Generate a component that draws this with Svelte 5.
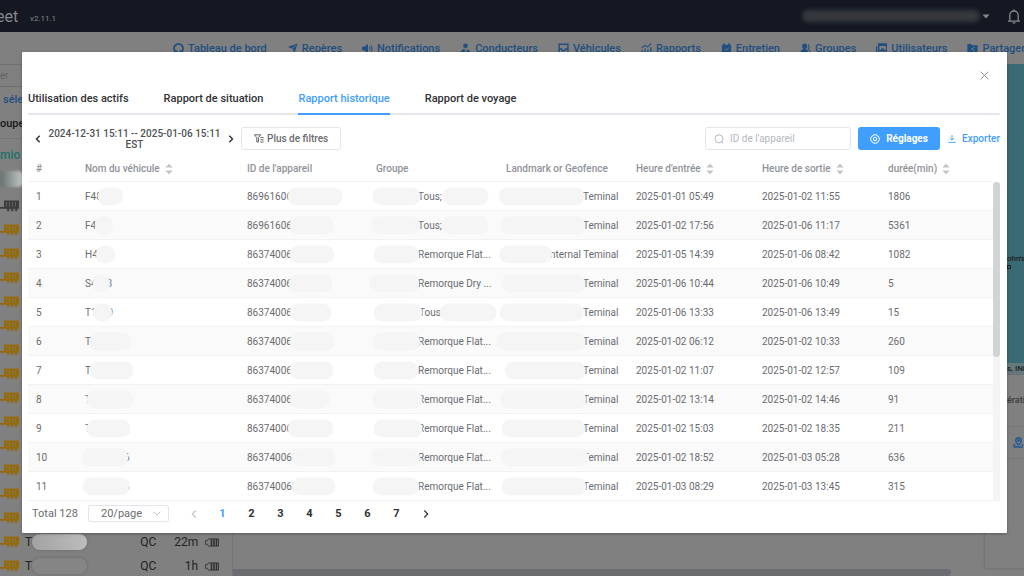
<script>
  const nav = [
    { label: "Tableau de bord", icon: "dash" },
    { label: "Repères", icon: "send" },
    { label: "Notifications", icon: "sound" },
    { label: "Conducteurs", icon: "driver" },
    { label: "Véhicules", icon: "inbox" },
    { label: "Rapports", icon: "chart" },
    { label: "Entretien", icon: "calendar" },
    { label: "Groupes", icon: "group" },
    { label: "Utilisateurs", icon: "users" },
    { label: "Partager", icon: "share" },
  ];

  const tabs = ["Utilisation des actifs", "Rapport de situation", "Rapport historique", "Rapport de voyage"];
  let activeTab = "Rapport historique";

  const columns = [
    { label: "#", width: 47 },
    { label: "Nom du véhicule", width: 162, sort: true },
    { label: "ID de l'appareil", width: 129 },
    { label: "Groupe", width: 130 },
    { label: "Landmark or Geofence", width: 130 },
    { label: "Heure d'entrée", width: 126, sort: true },
    { label: "Heure de sortie", width: 126, sort: true },
    { label: "durée(min)", width: 115, sort: true },
  ];

  // a cell is a list of parts: plain text, or a mask as [margin left, width, margin right]
  const rows = [
    [["F48", [-4, 25, 0]], ["86961606", [-4, 54, 0]], [[-3, 47, -2], "Tous;", [1, 45, 0]], [[-7, 85, -1], "Teminal"], "2025-01-01 05:49", "2025-01-02 11:55", "1806"],
    [["F4", [-1, 18, 0]], ["86961606", [-2, 43, 0]], [[-4, 48, -2], "Tous;", [1, 45, 0]], [[-5, 84, -2], "Teminal"], "2025-01-02 17:56", "2025-01-06 11:17", "5361"],
    [["H4", [-2, 19, 0]], ["86374006", [-2, 44, 0]], [[-2, 45, -1], "Remorque Flat..."], [[-6, 52, -2], "nternal Teminal"], "2025-01-05 14:39", "2025-01-06 08:42", "1082"],
    [["S4", [-4, 17, -3], "8"], ["86374006", [-3, 43, 0]], [[-6, 49, -1], "Remorque Dry ..."], [[-4, 83, -2], "Teminal"], "2025-01-06 10:44", "2025-01-06 10:49", "5"],
    [["T1", [-4, 19, -4], "9"], ["86374006", [-2, 41, 0]], [[-2, 48, -3], "Tous", [-1, 56, 0]], [[-6, 83, 0], "Teminal"], "2025-01-06 13:33", "2025-01-06 13:49", "15"],
    [["T", [-1, 41, 0]], ["86374006", [-2, 44, 0]], [[-3, 47, -2], "Remorque Flat..."], [[-9, 88, -2], "Teminal"], "2025-01-02 06:12", "2025-01-02 10:33", "260"],
    [["T", [-1, 43, 0]], ["86374006", [-2, 43, 0]], [[-2, 44, 0], "Remorque Flat..."], [[-1, 80, -2], "Teminal"], "2025-01-02 11:07", "2025-01-02 12:57", "109"],
    [["T", [-4, 46, 0]], ["86374006", [-2, 39, 0]], [[-3, 49, -4], "Remorque Flat..."], [[-5, 85, -3], "Teminal"], "2025-01-02 13:14", "2025-01-02 14:46", "91"],
    [["T", [-4, 43, 0]], ["86374006", [-4, 45, 0]], [[-2, 48, -4], "Remorque Flat..."], [[-4, 83, -2], "Teminal"], "2025-01-02 15:03", "2025-01-02 18:35", "211"],
    [[[-3, 46, -4], "6"], ["863740063", [-6, 43, 0]], [[-4, 48, -2], "Remorque Flat..."], [[-4, 86, -5], "Teminal"], "2025-01-02 18:52", "2025-01-03 05:28", "636"],
    [[[-2, 46, -5], "6"], ["863740063", [-6, 43, 0]], [[-3, 46, -1], "Remorque Flat..."], [[-4, 84, -3], "Teminal"], "2025-01-03 08:29", "2025-01-03 13:45", "315"],
  ];

  const pages = [1, 2, 3, 4, 5, 6, 7];
  let currentPage = 1;

  const assets = Array.from({ length: 16 }, (_, i) => ({
    online: i > 0,
    since: i === 14 ? "22m" : i === 15 ? "1h" : "",
  }));
</script>

<div class="page">
  <header class="topbar">
    <span class="brand">eet</span>
    <span class="version">v2.11.1</span>
    <span class="account"></span>
    <button class="icon-btn" aria-label="Compte">
      <svg width="8" height="5" viewBox="0 0 8 5"><path d="M0.5 0.5h7L4 4.5z" fill="#85878c" /></svg>
    </button>
    <button class="icon-btn bell" aria-label="Alertes">
      <svg width="14" height="15" viewBox="0 0 14 15" fill="none" stroke="#85878c" stroke-width="1.3">
        <path d="M1 12.2h12M2.8 12V6.2a4.2 4.2 0 0 1 8.4 0V12M7 2V.6M5.6 13.8h2.8" />
      </svg>
    </button>
  </header>

  <nav class="nav">
    {#each nav as item}
      <a href="#{item.icon}">
        <svg width="11" height="11" viewBox="0 0 12 12" fill="none" stroke="currentColor" stroke-width="1.6">
          {#if item.icon === "dash"}
            <path d="M3.6 10.2a4.9 4.9 0 1 1 4.8 0M4 10.8V8.2M8 10.8V8.2" stroke-width="2" />
          {:else if item.icon === "send"}
            <path d="M11.5.5L8.2 11 6 6.4.8 4.4z" fill="currentColor" stroke="none" />
            <path d="M9.4 2.8L5.8 6.3" stroke="#808080" stroke-width="1" />
          {:else if item.icon === "sound"}
            <path d="M0 4h2.5L6.5.8v10.4L2.5 8H0z" fill="currentColor" stroke="none" />
            <path d="M8 4.2q1.4 1.8 0 3.6M9.6 2.2q3 3.8 0 7.6" stroke-width="1.1" />
          {:else if item.icon === "driver"}
            <path d="M6 .5a2.6 2.6 0 1 1 0 5.2A2.6 2.6 0 0 1 6 .5zM.5 11.2Q1 7 4.5 6.6L7 9l1-2q3.2.8 3.5 4.2z" fill="currentColor" stroke="none" />
            <path d="M5 8.8l3 1.4" stroke="#808080" stroke-width=".9" />
          {:else if item.icon === "inbox"}
            <path d="M1.2 6.4V1.4h9.6v5M1.2 6.6h2.6l.8 1.8h2.8l.8-1.8h2.6v4.2H1.2z" stroke-width="1.6" />
          {:else if item.icon === "chart"}
            <path d="M1.2 11V7.5M4.4 11V6M7.6 11V7M10.8 11V4.5" stroke-width="1.4" />
            <path d="M.8 5.2l3.6-2.6 2.6 1.6L11.2.8" stroke-width="1.1" />
          {:else if item.icon === "calendar"}
            <path d="M1 1.8h1.6V.4h1.6v1.4h3.6V.4h1.6v1.4H11v9.4H1z" fill="currentColor" stroke="none" />
            <path d="M4 6.6l1.6 1.6L8.4 5" stroke="#808080" stroke-width="1" />
          {:else if item.icon === "group"}
            <path d="M5 .6a2.9 2.9 0 0 1 1.6 5.3v.8Q9.6 7.6 9.8 11H.3Q.4 7.6 3.5 6.7v-.8A2.9 2.9 0 0 1 5 .6z" fill="currentColor" stroke="none" />
            <path d="M8.6 1.5q2.6 2 .4 4.6 2.2 1.4 2.2 4.6" stroke-width="1.1" />
          {:else if item.icon === "users"}
            <path d="M3 1h8.4v7.4H3zM.8 3.5v7.4H9M3 2.4h8.4" stroke-width="1.5" />
            <path d="M4.4 8.4q2.8-5.4 5.6 0z" fill="currentColor" stroke="none" />
          {:else}
            <path d="M.4 1h4l1.2 1.5h6v8.7H.4z" fill="currentColor" stroke="none" />
            <path d="M8.4 4.4L5 6.6l3.4 2.4" stroke="#808080" stroke-width="1" />
          {/if}
        </svg>
        {item.label}
      </a>
    {/each}
  </nav>

  <div class="content">
    <aside class="sidebar">
      <div class="side-search">er</div>
      <div class="side-select">séle</div>
      <div class="side-group">oupe</div>
      <div class="side-kind">mio</div>
      <div class="side-mask"></div>
      <ul>
        {#each assets as asset}
          <li>
            <svg class:online={asset.online} width="20" height="14" viewBox="0 0 20 14">
              <path d="M4 1.5h15v8.2h-1.4a1.7 1.7 0 0 1-3.2 0h-.8a1.7 1.7 0 0 1-3.2 0h-.8a1.7 1.7 0 0 1-3.2 0H0V8h4z" fill="currentColor" />
              <path d="M6.5 3v4.5M9.5 3v4.5M12.5 3v4.5M15.5 3v4.5" stroke="#808080" stroke-width="1" opacity=".55" />
              <path d="M7.3 11.3h2M11.3 11.3h2M15.2 11.3h2" stroke="currentColor" stroke-width="2" />
            </svg>
            {#if asset.since}
              <span class="asset-name">T</span>
              <span class="asset-mask" class:dim={asset.since === "1h"}></span>
              <span class="state">QC</span>
              <span class="since">{asset.since}</span>
              <svg class="battery" width="14" height="9" viewBox="0 0 14 9" fill="none" stroke="#303133">
                <path d="M13.5.9H3.5L2.2 2.6H.7v3.8h1.5l1.3 1.7h10z" stroke-width=".9" />
                <path d="M6.5 1v7M9 1v7M11.5 1v7" stroke-width="1.6" />
              </svg>
            {/if}
          </li>
        {/each}
      </ul>
    </aside>

    <main>
      <div class="map">
        <span class="place">ohn's<br /><i></i></span>
        <span class="credit">s, INE</span>
      </div>
      <div class="below">
        <div class="track-area"><div class="h-scroll"></div></div>
        <div class="side-panel">
          <div class="panel-title">érati</div>
          <div class="panel-row">
            <svg width="11" height="11" viewBox="0 0 11 11" fill="none" stroke="#245790" stroke-width="1.4">
              <path d="M5.5 8Q2.6 5.4 2.8 3.4a2.7 2.7 0 0 1 5.4 0Q8.4 5.4 5.5 8zM2.4 7.4Q0 8 1.2 10h8.6M8.4 7.6l2 .8" />
              <circle cx="5.5" cy="3.5" r=".7" />
            </svg>
          </div>
        </div>
      </div>
    </main>
  </div>

  <div class="dialog" role="dialog" aria-label="Rapport historique">
    <div class="dialog-top">
      <button class="icon-btn" aria-label="Fermer">
        <svg width="9" height="9" viewBox="0 0 9 9"><path d="M.7.7l7.6 7.6M8.3.7L.7 8.3" stroke="#909399" stroke-width="1" /></svg>
      </button>
    </div>

    <div class="tabs" role="tablist">
      {#each tabs as tab}
        <button role="tab" aria-selected={tab === activeTab} class:active={tab === activeTab} on:click={() => (activeTab = tab)}>{tab}</button>
      {/each}
    </div>

    <div class="toolbar">
      <button class="icon-btn step" aria-label="Période précédente">
        <svg width="6" height="8" viewBox="0 0 6 8"><path d="M4.7.8L1.5 4l3.2 3.2" fill="none" stroke="#303133" stroke-width="1.4" /></svg>
      </button>
      <span class="range">2024-12-31 15:11 -- 2025-01-06 15:11<br />EST</span>
      <button class="icon-btn step" aria-label="Période suivante">
        <svg width="6" height="8" viewBox="0 0 6 8"><path d="M1.3.8L4.5 4 1.3 7.2" fill="none" stroke="#303133" stroke-width="1.4" /></svg>
      </button>
      <button class="filters">
        <svg width="10" height="9" viewBox="0 0 10 9" fill="none" stroke="#606266" stroke-width="1">
          <path d="M.4.8h6.4L4.4 3.6V8H2.8V3.6zM6.4 3.6h3.2M6.4 5.8h3.2M6.4 8h3.2" />
        </svg>
        Plus de filtres
      </button>
      <label class="search">
        <svg width="10" height="10" viewBox="0 0 10 10" fill="none" stroke="#b4b8c0" stroke-width="1"><circle cx="5" cy="4.8" r="4" /><path d="M7.4 7.4l1.6 1.8" /></svg>
        <input type="text" placeholder="ID de l'appareil" aria-label="ID de l'appareil" />
      </label>
      <button class="settings">
        <svg width="10" height="10" viewBox="0 0 10 10" fill="none" stroke="#fff" stroke-width="1">
          <path d="M3.2.9h3.6l.5 1.2 1.3.3.8 2.6-.8 2.6-1.3.3-.5 1.2H3.2l-.5-1.2-1.3-.3L.6 5l.8-2.6 1.3-.3z" />
          <circle cx="5" cy="5" r="1.7" />
        </svg>
        Réglages
      </button>
      <a class="export" href="#export">
        <svg width="8" height="8" viewBox="0 0 8 8" fill="none" stroke="#409eff" stroke-width=".9"><path d="M4 0v5M1.8 3L4 5.2 6.2 3M.3 7.4h7.4" /></svg>
        Exporter
      </a>
    </div>

    <div class="table-wrap">
      <div class="table-clip">
        <table>
          <colgroup>
            {#each columns as col}
              <col style="width: {col.width}px" />
            {/each}
          </colgroup>
          <thead>
            <tr>
              {#each columns as col}
                <th>
                  <div class="head">
                    {col.label}
                    {#if col.sort}
                      <svg width="8" height="12" viewBox="0 0 8 12" fill="#c0c4cc"><path d="M.3 4.5L4 .7l3.7 3.8zM.3 7.5L4 11.3l3.7-3.8z" /></svg>
                    {/if}
                  </div>
                </th>
              {/each}
            </tr>
          </thead>
          <tbody>
            {#each rows as row, i}
              <tr>
                <td>{i + 1}</td>
                {#each row as cell}
                  <td>
                    {#if typeof cell === "string"}
                      {cell}
                    {:else}
                      <div class="parts">
                        {#each cell as part}
                          {#if typeof part === "string"}
                            <span>{part}</span>
                          {:else}
                            <span class="mask" style="width: {part[1]}px; margin-left: {part[0]}px; margin-right: {part[2]}px"></span>
                          {/if}
                        {/each}
                      </div>
                    {/if}
                  </td>
                {/each}
              </tr>
            {/each}
          </tbody>
        </table>
      </div>
      <div class="v-scroll"><div class="thumb"></div></div>
    </div>

    <div class="pager">
      <span class="total">Total 128</span>
      <label class="size">
        <select aria-label="Lignes par page">
          <option>20/page</option>
        </select>
        <svg width="8" height="5" viewBox="0 0 8 5"><path d="M.7.7L4 4 7.3.7" fill="none" stroke="#c0c4cc" stroke-width="1" /></svg>
      </label>
      <button class="page-btn prev" aria-label="Page précédente">
        <svg width="6" height="8" viewBox="0 0 6 8"><path d="M4.7.5L1.3 4l3.4 3.5" fill="none" stroke="#c0c4cc" stroke-width="1.2" /></svg>
      </button>
      {#each pages as page}
        <button class="page-btn" class:current={page === currentPage} on:click={() => (currentPage = page)}>{page}</button>
      {/each}
      <button class="page-btn" aria-label="Page suivante">
        <svg width="6" height="8" viewBox="0 0 6 8"><path d="M1.3.5L4.7 4 1.3 7.5" fill="none" stroke="#303133" stroke-width="1.2" /></svg>
      </button>
    </div>
  </div>
</div>

<style>
  :global(body) {
    margin: 0;
    background: #808080;
  }

  .page {
    position: relative;
    display: flex;
    flex-direction: column;
    height: 100vh;
    overflow: hidden;
    background: #808080;
    font-family: Roboto, "Liberation Sans", sans-serif;
    font-size: 10px;
    color: #6a6c70;
  }

  .page * {
    box-sizing: border-box;
  }

  button,
  input,
  select {
    font: inherit;
    color: inherit;
    margin: 0;
    padding: 0;
    border: 0;
    background: none;
  }

  button {
    cursor: pointer;
  }

  a {
    text-decoration: none;
  }

  svg {
    display: block;
    flex: none;
  }

  .icon-btn {
    display: flex;
    align-items: center;
    justify-content: center;
  }

  .topbar {
    display: flex;
    align-items: center;
    flex: none;
    height: 32px;
    padding-right: 3px;
    background: #141822;
    color: #85878c;
  }

  .brand {
    font-size: 16px;
    margin-left: -4px;
    width: 34px;
  }

  .version {
    font-size: 8px;
    padding-top: 5px;
  }

  .account {
    width: 178px;
    height: 12px;
    margin-left: auto;
    margin-right: 2px;
    border-radius: 6px;
    background: #36383e;
    filter: blur(2px);
  }

  .bell {
    margin-left: 17px;
  }

  .nav {
    display: flex;
    align-items: center;
    gap: 20px;
    flex: none;
    height: 32px;
    padding-left: 173px;
    overflow: hidden;
  }

  .nav a {
    display: flex;
    align-items: center;
    gap: 4px;
    font-size: 11px;
    font-weight: 500;
    color: #204f80;
    white-space: nowrap;
  }

  .content {
    display: flex;
    flex: 1;
    min-height: 0;
  }

  .sidebar {
    width: 233px;
    flex: none;
    border-right: 1px solid #747578;
  }

  .side-search {
    height: 23px;
    line-height: 22px;
    border: 1px solid #6f7073;
    border-left: 0;
    color: #606266;
  }

  .side-select {
    padding: 3px 3px 0;
    line-height: 20px;
    font-size: 11px;
    font-weight: 500;
    color: #204f80;
  }

  .side-group {
    height: 29px;
    line-height: 28px;
    font-size: 11px;
    font-weight: 500;
    color: #18191a;
    border-bottom: 1px solid #727375;
  }

  .side-kind {
    line-height: 32px;
    font-size: 12px;
    font-weight: 500;
    color: #20706a;
  }

  .side-mask {
    width: 24px;
    height: 16px;
    border-radius: 0 6px 6px 0;
    background: linear-gradient(90deg, #66706e, #c8cccb);
    filter: blur(1px);
  }

  ul {
    list-style: none;
    margin: 0;
    padding: 7px 0 0;
  }

  li {
    display: flex;
    align-items: center;
    height: 24px;
    font-size: 12px;
    color: #222325;
  }

  li svg {
    color: #3c3d3e;
  }

  li svg.online {
    color: #936a0c;
  }

  .asset-name {
    margin-left: 5px;
  }

  .asset-mask {
    width: 55px;
    height: 16px;
    border-radius: 8px;
    background: linear-gradient(90deg, #a2a2a2, #bcbcbc);
    box-shadow: 0 0 3px #666;
  }

  .asset-mask.dim {
    background: #858585;
  }

  .state {
    margin-left: 53px;
    width: 20px;
  }

  .since {
    width: 38px;
    text-align: right;
  }

  .battery {
    margin-left: 7px;
  }

  main {
    display: flex;
    flex-direction: column;
    flex: 1;
    min-width: 0;
  }

  .map {
    display: flex;
    flex-direction: column;
    justify-content: space-between;
    align-items: flex-end;
    height: 311px;
    padding-top: 189px;
    background: #3a6a74;
    font-size: 8px;
    font-weight: 500;
    color: #1c2022;
  }

  .place,
  .credit {
    width: 17px;
    overflow: hidden;
    white-space: nowrap;
    line-height: 12px;
  }

  .credit {
    background: #66797d;
  }

  .place i {
    display: block;
    width: 4px;
    height: 4px;
    border: 1px solid #1c2022;
  }

  .below {
    display: flex;
    flex: 1;
  }

  .track-area {
    display: flex;
    flex: 1;
    align-items: flex-end;
    padding-right: 34px;
  }

  .h-scroll {
    flex: 1;
    height: 7px;
    border-radius: 0 4px 4px 0;
    background: #6b6c70;
  }

  .side-panel {
    width: 39px;
    margin-bottom: 8px;
    overflow: hidden;
    box-shadow: 0 0 3px #666;
  }

  .panel-title {
    padding: 0 0 0 22px;
    line-height: 51px;
    font-size: 9px;
    font-weight: 500;
    color: #3a3b3d;
    border-bottom: 1px solid #77787a;
  }

  .panel-row {
    padding: 10px 0 10px 28px;
    border-bottom: 1px solid #77787a;
  }

  .dialog {
    position: absolute;
    inset: 52px 17px 43px 22px;
    display: flex;
    flex-direction: column;
    padding: 0 7px 0 6px;
    background: #fff;
    border-radius: 1px;
    box-shadow: 0 1px 3px rgba(0, 0, 0, 0.3);
  }

  .dialog-top {
    display: flex;
    justify-content: flex-end;
    align-items: flex-end;
    height: 28px;
    padding-right: 11px;
  }

  .tabs {
    display: flex;
    gap: 35px;
    height: 35px;
    border-bottom: 2px solid #e4e7ed;
  }

  .tabs button {
    height: 35px;
    padding-top: 4px;
    border-bottom: 2px solid transparent;
    font-size: 11px;
    font-weight: 500;
    color: #303133;
  }

  .tabs button.active {
    color: #409eff;
    border-bottom-color: #409eff;
  }

  .toolbar {
    display: flex;
    align-items: center;
    height: 41px;
    padding-top: 6px;
  }

  .step {
    width: 20px;
    height: 20px;
  }

  .range {
    width: 173px;
    text-align: center;
    font-weight: 500;
    line-height: 11px;
    white-space: nowrap;
    color: #505256;
  }

  .filters {
    display: flex;
    align-items: center;
    gap: 3px;
    height: 23px;
    padding: 0 12px;
    border: 1px solid #e2e5ea;
    border-radius: 3px;
    font-weight: 500;
  }

  .search {
    display: flex;
    align-items: center;
    gap: 6px;
    width: 146px;
    height: 23px;
    margin-left: auto;
    margin-right: 7px;
    padding: 0 8px;
    border: 1px solid #e2e5ea;
    border-radius: 3px;
  }

  .search input {
    flex: 1;
    min-width: 0;
    outline: 0;
  }

  .search input::placeholder {
    color: #b4b8c0;
    opacity: 1;
  }

  .settings {
    display: flex;
    align-items: center;
    justify-content: center;
    gap: 6px;
    width: 82px;
    height: 23px;
    margin-right: 8px;
    border-radius: 3px;
    background: #409eff;
    color: #fff;
    font-weight: 700;
  }

  .export {
    display: flex;
    align-items: center;
    gap: 6px;
    color: #409eff;
    font-weight: 500;
  }

  .table-wrap {
    display: flex;
    flex: 1;
    min-height: 0;
    border-bottom: 1px solid #f0f2f5;
  }

  .table-clip {
    flex: 1;
    overflow: hidden;
  }

  table {
    width: 100%;
    table-layout: fixed;
    border-collapse: separate;
    border-spacing: 0;
  }

  th,
  td {
    padding: 0 0 0 10px;
    text-align: left;
    white-space: nowrap;
    border-bottom: 1px solid #f0f2f6;
  }

  th:first-child,
  td:first-child {
    padding-left: 8px;
  }

  th {
    height: 26px;
    font-weight: 500;
    color: #909399;
  }

  .head {
    display: flex;
    align-items: center;
    gap: 5px;
  }

  td {
    height: 29px;
  }

  tbody tr:nth-child(even) {
    background: #fafafa;
  }

  .parts {
    display: flex;
    align-items: center;
  }

  .mask {
    position: relative;
    flex: none;
    height: 17px;
    border-radius: 9px;
    background: #f5f5f5;
    box-shadow: 0 0 2px #f0f0f0;
  }

  .v-scroll {
    width: 7px;
    margin-top: 26px;
    background: #f4f4f4;
  }

  .thumb {
    height: 55%;
    border-radius: 4px;
    background: #d2d3d5;
  }

  .pager {
    display: flex;
    align-items: center;
    height: 32px;
    padding: 0 4px 7px;
    font-size: 11px;
  }

  .total {
    width: 56px;
  }

  .size {
    display: flex;
    align-items: center;
    width: 81px;
    height: 17px;
    padding: 0 7px 0 12px;
    border: 1px solid #e2e5ea;
    border-radius: 2px;
  }

  .size select {
    flex: 1;
    min-width: 0;
    appearance: none;
    outline: 0;
  }

  .page-btn {
    display: flex;
    align-items: center;
    justify-content: center;
    width: 29px;
    font-weight: 700;
    color: #303133;
  }

  .page-btn.current {
    color: #409eff;
  }

  .prev {
    margin-left: 10px;
  }
</style>
